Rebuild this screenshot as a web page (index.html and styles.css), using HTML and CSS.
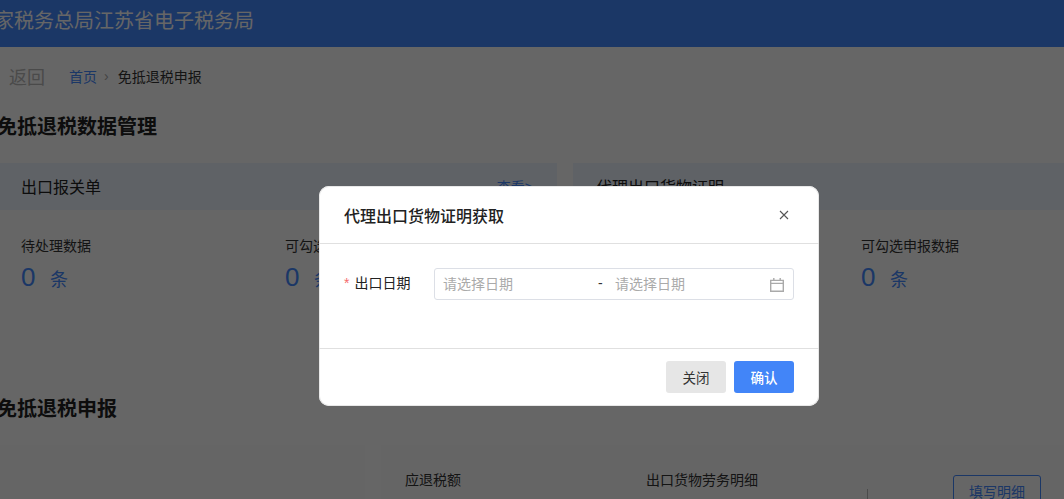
FILE: index.html
```html
<!DOCTYPE html>
<html lang="zh-CN">
<head>
<meta charset="utf-8">
<title>免抵退税申报</title>
<link rel="stylesheet" href="styles.css">
</head>
<body>
<div class="shell">
  <header class="topbar"><span class="brand">国家税务总局江苏省电子税务局</span></header>
  <main class="content">
    <nav class="crumbs">
      <span class="back">返回</span>
      <a class="crumb-link">首页</a>
      <span class="crumb-sep">›</span>
      <span class="crumb-current">免抵退税申报</span>
    </nav>
    <h2 class="section-title">免抵退税数据管理</h2>
    <div class="cards">
      <section class="card">
        <div class="card-head"><span>出口报关单</span><a class="card-link">查看&gt;</a></div>
        <div class="stats">
          <div class="stat"><div class="stat-label">待处理数据</div><div class="stat-value"><b>0</b><span>条</span></div></div>
          <div class="stat"><div class="stat-label">可勾选申报数据</div><div class="stat-value"><b>0</b><span>条</span></div></div>
        </div>
      </section>
      <section class="card">
        <div class="card-head"><span>代理出口货物证明</span></div>
        <div class="stats">
          <div class="stat"><div class="stat-label">待处理数据</div><div class="stat-value"><b>0</b><span>条</span></div></div>
          <div class="stat"><div class="stat-label">可勾选申报数据</div><div class="stat-value"><b>0</b><span>条</span></div></div>
        </div>
      </section>
    </div>
    <h2 class="section-title lower">免抵退税申报</h2>
    <div class="declare">
      <div class="declare-side"></div>
      <div class="declare-main">
        <div class="declare-label refund">应退税额</div>
        <div class="declare-label goods">出口货物劳务明细</div>
        <div class="declare-rule"></div>
        <button class="outline-btn">填写明细</button>
      </div>
    </div>
  </main>
</div>

<div class="overlay">
  <div class="modal">
    <div class="modal-head">
      <span class="modal-title">代理出口货物证明获取</span>
      <svg class="modal-close" viewBox="0 0 10 10" width="10" height="10"><path d="M1 1l8 8M9 1l-8 8" stroke="#555" stroke-width="1.1" fill="none"/></svg>
    </div>
    <div class="modal-body">
      <div class="field-label"><i class="req">*</i>出口日期</div>
      <div class="date-range">
        <span class="date-input">请选择日期</span>
        <span class="date-sep">-</span>
        <span class="date-input second">请选择日期</span>
        <svg class="date-icon" viewBox="0 0 14 14" width="14" height="14"><path d="M.7 2.4h12.6v10.9H.7zM.7 5.4h12.6M3.8 0v3M10.2 0v3" stroke="#aaa" stroke-width="1.4" fill="none"/></svg>
      </div>
    </div>
    <div class="modal-foot">
      <button class="btn btn-plain">关闭</button>
      <button class="btn btn-primary">确认</button>
    </div>
  </div>
</div>
</body>
</html>
```
FILE: styles.css
```css
* { box-sizing: border-box; }
html, body { margin: 0; height: 499px; overflow: hidden; }
body {
  position: relative;
  background: #fff;
  color: #222;
  font-family: "Liberation Sans", "Noto Sans CJK SC", sans-serif;
  font-size: 14px;
}
.shell { width: 1300px; margin-left: -20px; }
.topbar {
  height: 47px;
  background: #4489ff;
  color: #fff;
  font-size: 20px;
  line-height: 43px;
}
.brand { margin-left: -6px; }
.content { padding-left: 19px; }
.crumbs { display: flex; align-items: center; height: 60px; padding: 0 0 2px 10px; }
.back { color: #b9b9b9; font-size: 18px; width: 60px; }
.crumb-link { color: #4489ff; font-size: 14px; }
.crumb-sep { color: #aaa; margin: 0 9px 0 7px; font-size: 14px; }
.crumb-current { font-size: 14px; color: #333; }
.section-title { margin: 0 0 0 -2px; font-size: 20px; line-height: 28px; font-weight: 700; color: #222; padding-top: 6px; height: 56px; }
.cards { display: flex; gap: 16px; height: 192px; }
.card { flex: 0 0 558px; }
.card-head {
  display: flex;
  justify-content: space-between;
  height: 47px;
  background: #edf4ff;
  padding: 13px 24px 0 22px;
  font-size: 16px;
  line-height: 24px;
}
.card + .card .card-head { padding-left: 23px; }
.card-link { color: #4489ff; font-size: 14px; line-height: 22px; }
.stats { display: flex; padding: 25px 0 0 22px; }
.card + .card .stats { padding-left: 24px; }
.stat { width: 264px; }
.stat-label { line-height: 22px; color: #333; }
.stat-value { display: flex; align-items: baseline; color: #4489ff; margin-top: 2px; }
.stat-value b { font-weight: 400; font-size: 26px; width: 29px; line-height: 36px; }
.stat-value span { font-size: 18px; }
.lower { padding-top: 40px; height: 90px; }
.declare { display: flex; gap: 16px; height: 120px; }
.declare-side { flex: 0 0 366px; background: #fcfcfc; }
.declare-main { flex: 1; position: relative; background: #fcfcfc; }
.declare-label { position: absolute; top: 25px; line-height: 20px; color: #333; }
.refund { left: 24px; }
.goods { left: 265px; }
.declare-rule { position: absolute; left: 486px; top: 44px; width: 1px; height: 40px; background: #bbb; }
.outline-btn {
  position: absolute;
  left: 572px;
  top: 30px;
  width: 88px;
  height: 32px;
  background: #fff;
  border: 1px solid #4489ff;
  border-radius: 3px;
  color: #4489ff;
  font: inherit;
}
.overlay {
  position: absolute;
  inset: 0;
  background: rgba(0, 0, 0, .6);
  padding: 186px 0 0 319px;
}
.modal { width: 500px; height: 220px; background: #fff; border-radius: 10px; box-shadow: inset 0 0 0 1px #e8e8e8; display: flex; flex-direction: column; }
.modal-head {
  height: 58px;
  border-bottom: 1px solid #e0e0e0;
  display: flex;
  align-items: center;
  justify-content: space-between;
  padding: 0 30px 0 25px;
}
.modal-title { font-size: 16px; font-weight: 500; color: #222; }
.modal-body { flex: 0 0 104px; display: flex; align-items: flex-start; padding: 24px 25px 0; }
.field-label { width: 90px; height: 32px; line-height: 31px; font-size: 14px; color: #222; }
.req { color: #f56c6c; font-style: normal; margin-right: 5px; }
.date-range {
  position: relative;
  width: 360px;
  height: 32px;
  border: 1px solid #dcdfe6;
  border-radius: 3px;
  display: flex;
  align-items: center;
  padding: 0 0 2px 8px;
}
.date-input { color: #aaa; width: 155px; }
.date-sep { color: #333; width: 17px; }
.date-icon { position: absolute; right: 9px; top: 9px; }
.modal-foot {
  flex: 1;
  border-top: 1px solid #e0e0e0;
  display: flex;
  justify-content: flex-end;
  gap: 8px;
  padding: 12px 25px 0;
}
.btn { width: 60px; height: 32px; border: 0; border-radius: 3px; font: inherit; font-size: 13.5px; }
.btn-plain { background: #e6e6e6; color: #333; }
.btn-primary { background: #4285f8; color: #fff; font-weight: 500; }
```
